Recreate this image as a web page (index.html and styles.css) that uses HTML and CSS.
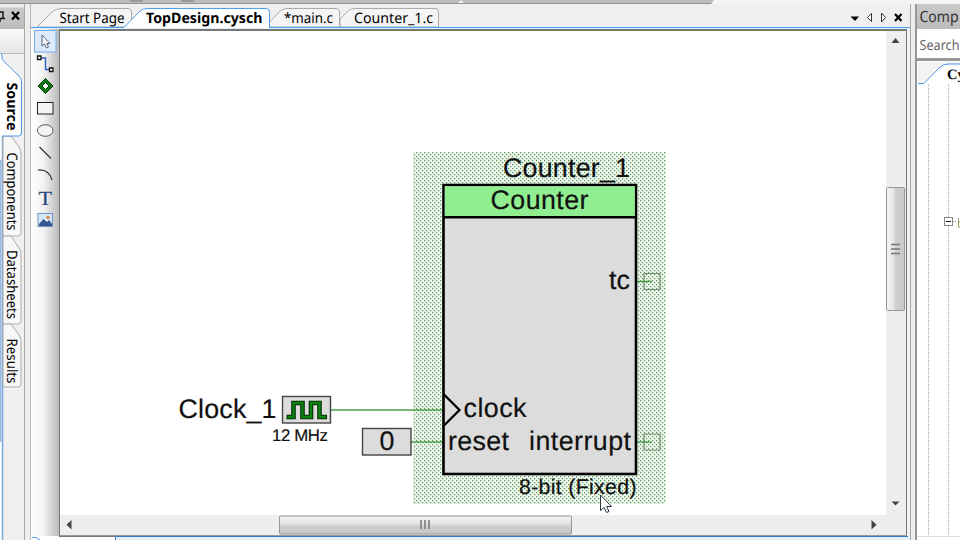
FILE: index.html
```html
<!DOCTYPE html>
<html lang="en">
<head>
<meta charset="utf-8">
<title>TopDesign.cysch</title>
<link rel="stylesheet" href="styles.css">
</head>
<body>
<div class="app">
  <div class="topbar"><svg viewBox="0 0 960 4" width="960" height="4"><path d="M130 0H143V2H130ZM181 0H194V2H181Z" fill="#999"/><path d="M458 3L461 0L464 3ZM711 4L714 0H960V4Z" fill="#f4f4f4"/></svg></div>
  <div class="panes">
    <aside class="left-dock">
      <div class="left-title"><svg viewBox="0 4 24 25" width="24" height="25"><path d="M0 12H3V18M0 18.500H5M0 19V22" fill="none" stroke="#111" stroke-width="1.400"/><path d="M12 12L19 19.500M19 12L12 19.500" stroke="#000" stroke-width="2.400"/></svg></div>
      <div class="left-tools"></div>
      <div class="side-tabs">
        <svg viewBox="0 54 24 486" width="24" height="486">
          <path d="M0 54H2V540H0Z" fill="#fff"/><path d="M0 160H1.500V442H0Z" fill="#9ab9df"/>
          <path d="M2.500 136V540" stroke="#78a9dc" stroke-width="1.500"/>
          <path d="M3 136H11L19 147Q21 150 21 154V233Q21 236 18 236H3Z" fill="#f7f7f7" stroke="#aaa"/>
          <path d="M3 236H11L19 248Q21 251 21 254V321Q21 324 18 324H3Z" fill="#f7f7f7" stroke="#aaa"/>
          <path d="M3 324H11L19 335Q21 338 21 341V384Q21 387 18 387H3Z" fill="#f7f7f7" stroke="#aaa"/>
          <path d="M1 54L2.500 60L18 75Q21.500 78 21.500 82V133Q21.500 136 18.500 136H1Z" fill="#fff"/>
          <path d="M1.500 54L2.500 60L18 75Q21.500 78 21.500 82V133Q21.500 136 18.500 136H2.500" fill="none" stroke="#4c98eb"/>
          <text class="side-label strong" transform="translate(7 82.500) rotate(90)" textLength="48" lengthAdjust="spacingAndGlyphs">Source</text>
          <text class="side-label" transform="translate(7 152.500) rotate(90)" textLength="78" lengthAdjust="spacingAndGlyphs">Components</text>
          <text class="side-label" transform="translate(7 250) rotate(90)" textLength="69" lengthAdjust="spacingAndGlyphs">Datasheets</text>
          <text class="side-label" transform="translate(7 338.500) rotate(90)" textLength="45" lengthAdjust="spacingAndGlyphs">Results</text>
        </svg>
      </div>
    </aside>
    <div class="splitter"></div>
    <main class="editor">
      <nav class="tab-row">
        <svg viewBox="31 4 410 24" width="410" height="24">
          <path d="M37 27L52 12Q56 8.500 61 8.500H128Q131.500 8.500 131.500 12V27Z" fill="#f5f5f5" stroke="#aaa"/>
          <path d="M265 27L279 12Q283 8.500 287 8.500H335Q339.500 8.500 339.500 12V27Z" fill="#f5f5f5" stroke="#aaa"/>
          <path d="M340 19L347 12Q350 8.500 355 8.500H435Q438.500 8.500 438.500 12V27H340Z" fill="#f5f5f5" stroke="#aaa"/>
          <path d="M31 27.500H124L139 12Q142 8.500 147 8.500H266Q269.500 8.500 269.500 12V27.500H441V28H31Z" fill="#fff"/>
          <path d="M31 27.500H124L139 12Q142 8.500 147 8.500H266Q269.500 8.500 269.500 12V27.500H441" fill="none" stroke="#4ca0ef"/>
          <text class="tab-label" x="59.500" y="23" textLength="65" lengthAdjust="spacingAndGlyphs">Start Page</text>
          <text class="tab-label strong" x="146" y="23" textLength="116.500" lengthAdjust="spacingAndGlyphs">TopDesign.cysch</text>
          <text class="tab-label" x="284" y="23" textLength="49" lengthAdjust="spacingAndGlyphs">*main.c</text>
          <text class="tab-label" x="354" y="23" textLength="79" lengthAdjust="spacingAndGlyphs">Counter_1.c</text>
        </svg>
        <svg class="tab-controls" viewBox="846 4 64 24" width="64" height="24"><path d="M850.500 16.500H859L855 21Z" fill="#000"/><path d="M871.500 13.500L867.500 17.500L871.500 21.500ZM881.500 13L885.500 17.500L881.500 22Z" fill="#fff" stroke="#333"/><path d="M895 14L901.500 21M901.500 14L895 21" stroke="#000" stroke-width="2.200"/></svg>
      </nav>
      <div class="workspace">
        <div class="toolbox">
          <svg viewBox="31 29 28 206" width="28" height="206">
            <rect x="34.500" y="30.500" width="21.500" height="21.500" fill="#dceafa" stroke="#76ace9"/>
            <path d="M42 35V46L44.500 44L46.500 48L48.500 47L46.700 43.500H50Z" fill="#fff" stroke="#53637a"/>
            <path d="M41 58H45.500V69.500H50" fill="none" stroke="#2d61d2" stroke-width="1.400"/>
            <path d="M37.500 56H41V59.500H37.500ZM49.500 68H53V71.500H49.500Z" fill="#fff" stroke="#111" stroke-width="1.300"/>
            <path d="M45.500 78.500L53 86L45.500 93.500L38 86Z" fill="#0a7b0e" stroke="#053a06"/><path d="M45.500 82.500L49 86L45.500 89.500L42 86Z" fill="#fff" stroke="#053a06"/>
            <rect x="37.500" y="102.500" width="15.500" height="11.500" fill="#f4f4f4" stroke="#222"/>
            <ellipse cx="45.300" cy="130.500" rx="7.800" ry="5.800" fill="#f4f4f4" stroke="#555"/>
            <path d="M39.500 147L51 158.500M38 170Q49 169 52 180" fill="none" stroke="#333" stroke-width="1.200"/>
            <text class="text-tool" x="38.500" y="204.500" textLength="13.500" lengthAdjust="spacingAndGlyphs">T</text>
            <rect x="38" y="213.500" width="14.500" height="13" fill="#d8e8fa" stroke="#7192c1"/><path d="M39 224L43.500 219L47 222L49 220L52 224V226H39Z" fill="#35578e"/><circle cx="48" cy="217.500" r="1.800" fill="#e28b3d"/>
          </svg>
        </div>
        <div class="document">
          <div class="view">
            <svg class="schematic" viewBox="60 31 826 484" width="826" height="484">
              <defs>
                <pattern id="halo" width="4" height="4" patternUnits="userSpaceOnUse"><rect width="4" height="4" fill="#f1f8f1"/><path d="M0 0H1.250V1.250H0ZM2 2H3.250V3.250H2Z" fill="#559a55"/></pattern>
              </defs>
              <rect x="413" y="152" width="253" height="352" fill="url(#halo)"/>
              <path d="M331 410H444M411 442H444M637 281.500H652M637 442H652" stroke="#49a34d" stroke-width="1.400"/>
              <path d="M644 273.500H660V289.500H644ZM644 434H660V450H644Z" fill="none" stroke="#6f8a6f" stroke-width="1.200"/>
              <rect x="443.500" y="185" width="192.500" height="289" fill="#dcdcdc" stroke="#000" stroke-width="2.600"/>
              <path d="M444.800 186.300H634.700V216.500H444.800Z" fill="#90ee90"/>
              <path d="M443 217.300H636" stroke="#000" stroke-width="2.400"/>
              <path d="M444 394.500L459.500 410L444 425.500" fill="none" stroke="#000" stroke-width="2.200"/>
              <rect x="282.500" y="396.500" width="48" height="26.500" fill="#dcdcdc" stroke="#444" stroke-width="1.400"/>
              <path d="M286.500 417H293.500V403H302.500V417H311V403H319.500V417H327" fill="none" stroke="#052f06" stroke-width="4.600"/>
              <path d="M287.500 417H293.500V403H302.500V417H311V403H319.500V417H326" fill="none" stroke="#0b850f" stroke-width="2.300"/>
              <rect x="362.500" y="428.500" width="48.500" height="26.500" fill="#dcdcdc" stroke="#444" stroke-width="1.400"/>
              <g class="part-text">
                <text x="503" y="177" textLength="127">Counter_1</text>
                <text x="490.500" y="209" textLength="98">Counter</text>
                <text x="609" y="289" textLength="21">tc</text>
                <text x="463.500" y="417" textLength="63">clock</text>
                <text x="448" y="450" textLength="61">reset</text>
                <text x="529" y="450" textLength="102">interrupt</text>
                <text x="178.500" y="418" textLength="98">Clock_1</text>
                <text x="379.500" y="450" textLength="15">0</text>
                <text class="detail" x="519" y="494" textLength="117.500">8-bit (Fixed)</text>
                <text class="frequency" x="272" y="441" textLength="56">12 MHz</text>
              </g>
              <path d="M600.500 495V510.500L604 507.500L606.500 512.500L609 511.500L606.700 506.500H611.500Z" fill="#fff" stroke="#293447"/>
            </svg>
            <svg class="vscroll" viewBox="886 31 20 484" width="20" height="484"><defs><linearGradient id="v"><stop stop-color="#f7f7f7"/><stop offset=".4" stop-color="#e4e4e4"/><stop offset=".5" stop-color="#d0d0d0"/><stop offset="1" stop-color="#c9c9c9"/></linearGradient></defs><path d="M891.500 43L895.500 38L899.500 43ZM891.500 501.500H899.500L895.500 505.500Z" fill="#444"/><rect x="886.500" y="187.500" width="18" height="123" rx="1" fill="url(#v)" stroke="#969696"/><path d="M891 244.500H900M891 249H900M891 253.500H900" stroke="#777" stroke-width="1.500"/></svg>
          </div>
          <svg class="hscroll" viewBox="60 515 846 20" width="846" height="20"><defs><linearGradient id="h" x2="0" y2="1"><stop stop-color="#f5f5f5"/><stop offset=".45" stop-color="#e2e2e2"/><stop offset=".55" stop-color="#d0d0d0"/><stop offset="1" stop-color="#c5c5c5"/></linearGradient></defs><path d="M71.500 520V529.500L66.500 524.700ZM871.500 520V529.500L876.500 524.700Z" fill="#444"/><rect x="279.500" y="516" width="292" height="18" rx="1" fill="url(#h)" stroke="#969696"/><path d="M421 520V529M425 520V529M429 520V529" stroke="#777" stroke-width="1.500"/></svg>
        </div>
      </div>
      <div class="next-pane"><svg viewBox="31 536 879 4" width="879" height="4"><path d="M31 536H115V540H31Z" fill="#fff"/><path d="M115 536H910V540H115Z" fill="#e5effa"/><path d="M59 536.500H115" stroke="#777"/><path d="M32 537.500H36L40 540" fill="none" stroke="#4c98eb"/><path d="M115.500 540V536.500H908" fill="none" stroke="#3a78c9"/></svg></div>
    </main>
    <div class="splitter right-splitter"></div>
    <aside class="right-dock">
      <div class="catalog-title"><svg viewBox="917 4 43 25" width="43" height="25"><text class="catalog-heading" x="919.500" y="22" textLength="39" lengthAdjust="spacingAndGlyphs">Comp</text></svg></div>
      <div class="search"><svg viewBox="917 29 43 29" width="43" height="29"><text class="search-text" x="919.500" y="50" textLength="40" lengthAdjust="spacingAndGlyphs">Search</text></svg></div>
      <svg class="tree" viewBox="917 58 43 482" width="43" height="482"><path d="M917 58H960V61H917Z" fill="#999"/><path d="M918 62H960V83H918Z" fill="#f3f3f3"/><path d="M918 83H924L939 68Q943 64 948 64H960V84H918Z" fill="#fff"/><path d="M918 83.500H924L939 68Q943 64 948 64H960" fill="none" stroke="#4c98eb"/><text class="catalog-tab" x="947" y="79">Cy</text><path d="M928.500 84V536M948.500 84V536" stroke="#aaa" stroke-dasharray="1 1"/><rect x="944.500" y="217.500" width="8" height="8" fill="#fff" stroke="#888"/><path d="M946 221.500H951" stroke="#111"/><path d="M953 221.500H957" stroke="#888" stroke-dasharray="1 1"/><path d="M958.500 218V227H960M958 222H960" fill="none" stroke="#94a368"/><path d="M917 536.500H960" stroke="#ddd"/></svg>
    </aside>
  </div>
</div>
</body>
</html>
```
FILE: styles.css
```css
* { box-sizing: border-box; }
body { margin: 0; width: 960px; height: 540px; overflow: hidden; background: #f1f1f1; color: #111; font-family: "Noto Sans", "Open Sans", sans-serif; }
svg { display: block; flex-shrink: 0; }
text { text-rendering: geometricPrecision; }
.app { display: flex; flex-direction: column; height: 540px; }
.topbar { height: 4px; background: #bdbdbd; border-bottom: 1px solid #929292; }
.panes { display: flex; height: 536px; }
.left-dock { width: 24px; overflow: hidden; background: #f0f0f0; }
.left-title { height: 25px; background: linear-gradient(#ececec 3px, #c9c9c9 4px, #bcbcbc); }
.left-tools { height: 25px; background: linear-gradient(#f9f9f9, #e6e6e6); border-bottom: 1px solid #b7b7b7; }
.splitter { width: 7px; background: #ededed; border-left: 1px solid #a8a8a8; border-right: 1px solid #b9b9b9; }
.editor { display: flex; flex-direction: column; width: 879px; }
.tab-row { display: flex; height: 24px; background: #efefef; border-bottom: 1px solid #4ca0ef; }
.tab-controls { margin-left: auto; }
.tab-label { font-family: "Noto Sans", sans-serif; font-size: 14.4px; }
.strong { font-weight: 700; }
.workspace { display: flex; height: 508px; border-top: 1px solid #deeffd; }
.toolbox { width: 28px; background: linear-gradient(90deg, #fff, #f2f2f2 45%, #bababa); }
.text-tool { font: 20px "Liberation Serif", serif; fill: #27477f; stroke: #27477f; stroke-width: .2px; }
.document { width: 848px; border: 1px solid #777; border-top-width: 2px; border-bottom-color: #999; background: #fff; }
.view { display: flex; }
.vscroll, .hscroll { background: #eee; }
.part-text { font-family: "Liberation Sans", sans-serif; font-size: 26.8px; fill: #111; stroke: #111; stroke-width: .2px; }
.part-text .detail { font-size: 21.3px; }
.part-text .frequency { font-size: 16.8px; }
.next-pane { height: 4px; }
.right-splitter { border-right: 2px solid #979797; }
.right-dock { width: 43px; overflow: hidden; background: #fff; }
.catalog-title { height: 25px; background: linear-gradient(#c9c9c9, #bcbcbc); }
.catalog-heading { font-size: 15.5px; fill: #333; }
.search { height: 29px; }
.search-text { font-size: 14px; fill: #666; }
.catalog-tab { font: bold 14.5px "Liberation Serif", serif; }
.side-label { font-family: "Noto Sans", sans-serif; font-size: 14.4px; }
```
